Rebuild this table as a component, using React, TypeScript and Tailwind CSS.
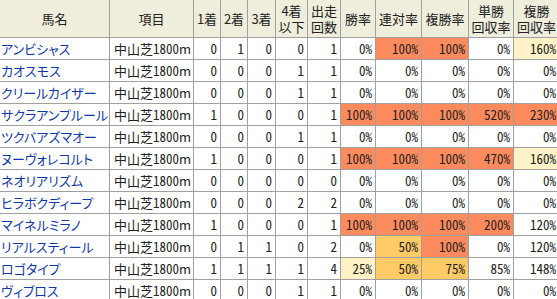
import React from "react";

type Hl = "o" | "g" | "y" | "";
type Row = {
  name: string;
  counts: [number, number, number, number, number];
  rates: [string, Hl][];
};

const rows: Row[] = [
  { name: "アンビシャス", counts: [0, 1, 0, 0, 1], rates: [["0%", ""], ["100%", "o"], ["100%", "o"], ["0%", ""], ["160%", "y"]] },
  { name: "カオスモス", counts: [0, 0, 0, 1, 1], rates: [["0%", ""], ["0%", ""], ["0%", ""], ["0%", ""], ["0%", ""]] },
  { name: "クリールカイザー", counts: [0, 0, 0, 1, 1], rates: [["0%", ""], ["0%", ""], ["0%", ""], ["0%", ""], ["0%", ""]] },
  { name: "サクラアンプルール", counts: [1, 0, 0, 0, 1], rates: [["100%", "o"], ["100%", "o"], ["100%", "o"], ["520%", "o"], ["230%", "o"]] },
  { name: "ツクバアズマオー", counts: [0, 0, 0, 1, 1], rates: [["0%", ""], ["0%", ""], ["0%", ""], ["0%", ""], ["0%", ""]] },
  { name: "ヌーヴォレコルト", counts: [1, 0, 0, 0, 1], rates: [["100%", "o"], ["100%", "o"], ["100%", "o"], ["470%", "o"], ["160%", "y"]] },
  { name: "ネオリアリズム", counts: [0, 0, 0, 0, 0], rates: [["0%", ""], ["0%", ""], ["0%", ""], ["0%", ""], ["0%", ""]] },
  { name: "ヒラボクディープ", counts: [0, 0, 0, 2, 2], rates: [["0%", ""], ["0%", ""], ["0%", ""], ["0%", ""], ["0%", ""]] },
  { name: "マイネルミラノ", counts: [1, 0, 0, 0, 1], rates: [["100%", "o"], ["100%", "o"], ["100%", "o"], ["200%", "o"], ["120%", ""]] },
  { name: "リアルスティール", counts: [0, 1, 1, 0, 2], rates: [["0%", ""], ["50%", "g"], ["100%", "o"], ["0%", ""], ["120%", ""]] },
  { name: "ロゴタイプ", counts: [1, 1, 1, 1, 4], rates: [["25%", "y"], ["50%", "g"], ["75%", "g"], ["85%", ""], ["148%", ""]] },
  { name: "ヴィブロス", counts: [0, 0, 0, 1, 1], rates: [["0%", ""], ["0%", ""], ["0%", ""], ["0%", ""], ["0%", ""]] },
];

const bgFor = (h: Hl) =>
  h === "o" ? "bg-[#fe8b5d]" : h === "g" ? "bg-[#fecb66]" : h === "y" ? "bg-[#fdf3c6]" : "bg-white";

const headers: string[][] = [
  ["馬名"],
  ["項目"],
  ["1着"],
  ["2着"],
  ["3着"],
  ["4着", "以下"],
  ["出走", "回数"],
  ["勝率"],
  ["連対率"],
  ["複勝率"],
  ["単勝", "回収率"],
  ["複勝", "回収率"],
];

export default function App() {
  return (
    <div className="w-[557px] h-[299px] overflow-hidden bg-white">
      <div
        className="grid w-[559px] gap-px bg-[#a0a0a0] grid-cols-[109px_83px_26px_26px_27px_31px_32px_34px_45px_46px_44px_45px] grid-rows-[37px_repeat(12,21px)] text-[13px] text-[#222] [font-family:'Noto_Sans_CJK_JP','Noto_Sans',sans-serif]"
      >
        {headers.map((h, i) => (
          <div
            key={i}
            className="bg-[#efeddb] flex flex-col items-center justify-center leading-[16px] whitespace-nowrap"
          >
            {h.map((l, j) => (
              <span key={j}>{l}</span>
            ))}
          </div>
        ))}
        {rows.map((r, ri) => (
          <React.Fragment key={ri}>
            <div className="bg-white flex items-center pl-[1px] text-[#1238a8] whitespace-nowrap overflow-hidden [font-feature-settings:'palt']">
              {r.name}
            </div>
            <div className="bg-white flex items-center pl-[4px] whitespace-nowrap">
              中山芝<span className="[font-feature-settings:'hwid']">1800</span>m
            </div>
            {r.counts.map((c, ci) => (
              <div
                key={ci}
                className="bg-white flex items-center justify-end pr-[3px] [font-feature-settings:'hwid']"
              >
                {c}
              </div>
            ))}
            {r.rates.map(([v, h], ci) => (
              <div
                key={ci}
                className={`${bgFor(h)} flex items-center justify-end pr-[3px] [font-feature-settings:'hwid']`}
              >
                {v}
              </div>
            ))}
          </React.Fragment>
        ))}
      </div>
    </div>
  );
}
